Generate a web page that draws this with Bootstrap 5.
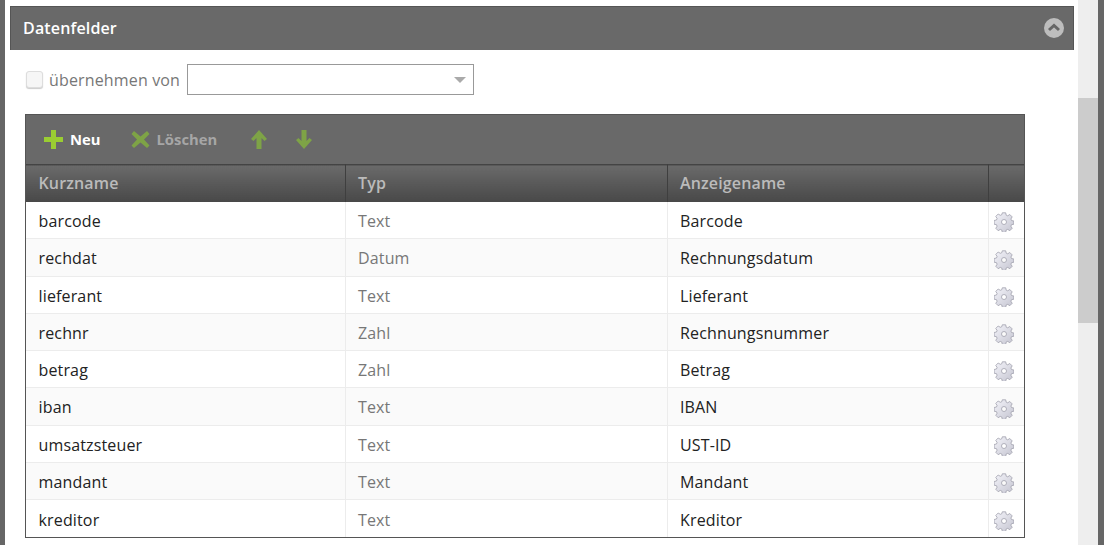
<!DOCTYPE html>
<html lang="de">
<head>
  <meta charset="UTF-8">
  <title>Datenfelder</title>
  <link href="https://cdn.jsdelivr.net/npm/bootstrap@5.3.0/dist/css/bootstrap.min.css" rel="stylesheet">
  <style>
    html, body { height: 545px; overflow: hidden; }
    body { font-family: "Open Sans", "Liberation Sans", sans-serif; font-size: 16px; letter-spacing: .15px; color: #222; background: #fff; }
    .edge-left { width: 5px; background: #666; }
    .edge-right { width: 6px; background: #666; }
    .main { width: 1073px; padding: 6px 0 0 5px; }
    .scroll-track { width: 20px; background: #eee; }
    .scroll-thumb { height: 225px; margin-top: 98px; background: #ccc; }
    .panel-head { width: 1064px; height: 44px; background: #696969; border: 1px solid #555; border-bottom: 0; padding: 0 9px 1px 12px; color: #fff; font-weight: 600; }
    .copy-row { height: 64px; padding: 0 0 5px 16px; color: #777; }
    .fake-check { width: 17px; height: 17px; border: 1px solid #ddd; border-radius: 3px; background: #f6f6f6; box-shadow: 0 1px 1px #ccc; margin-right: 6px; }
    .fake-select { width: 287px; height: 31px; border: 1px solid #999; margin-left: 7px; padding-right: 7px; }
    .caret { border-left: 6px solid transparent; border-right: 6px solid transparent; border-top: 6px solid #aaa; }
    .grid-box { width: 1000px; margin-left: 15px; border: 1px solid #555; border-top: 0; }
    .grid-tools { height: 50px; background: #696969; border-top: 1px solid #555; padding-left: 17px; font-size: 14.8px; font-weight: 700; color: #fff; letter-spacing: 0; }
    .tool { margin-right: 30px; }
    .tool.off { margin-right: 33px; color: #a6a6a6; }
    .tool.arrow { margin-right: 27px; }
    .tool svg { display: block; }
    .tool-label { margin-left: 6px; }
    .tool.off .tool-label { margin-left: 7px; }
    .grid-table { table-layout: fixed; width: 998px; margin: 0; }
    .grid-table th { height: 37px; padding: 0 12.500px; font-weight: 600; color: #bbb; background: linear-gradient(#6a6a6a, #484848); border-top: 1px solid #444; border-right: 1px solid #3f3f3f; vertical-align: middle; }
    .grid-table td { height: 37.3px; padding: 1.600px 12.500px 0; vertical-align: middle; border-bottom: 1px solid #ececec; border-right: 1px solid #ececec; color: #222; white-space: nowrap; }
    .grid-table tr:nth-child(even) td { background: #fafafa; }
    .grid-table th:last-child, .grid-table td:last-child { border-right: 0; padding: 0 5px 0 0; text-align: center; }
    .grid-table td svg { display: inline-block; vertical-align: middle; margin-top: 1px; }
    .grid-table tr:last-child td { border-bottom: 0; }
    .grid-table td.type { color: #777; }
  </style>
</head>
<body>
<svg width="0" height="0" class="position-absolute">
  <defs>
    <linearGradient id="gearFill" x1="0" y1="0" x2="1" y2="1">
      <stop offset="0" stop-color="#f4f4fa"/>
      <stop offset="1" stop-color="#c4c4d0"/>
    </linearGradient>
    <symbol id="gear" viewBox="0 0 20 20">
      <path fill="url(#gearFill)" stroke="#a0a0ac" stroke-width=".8" fill-rule="evenodd" d="M8.3 .8h3.400l.5 2.400 1.500.6 2.100-1.300 2.400 2.400-1.300 2.100.6 1.500 2.400.5v3.200l-2.400.5-.6 1.500 1.300 2.100-2.400 2.400-2.100-1.300-1.500.6-.5 2.400H8.300l-.5-2.400-1.500-.6-2.100 1.300-2.400-2.400 1.300-2.100-.6-1.500-2.400-.5V8.500l2.400-.5.6-1.500-1.300-2.100 2.400-2.400 2.100 1.300 1.500-.6zM10 7.500a2.500 2.500 0 1 0 0 5 2.500 2.500 0 0 0 0-5z"/>
    </symbol>
  </defs>
</svg>
<div class="d-flex" style="height:545px">
  <div class="edge-left flex-shrink-0"></div>
  <div class="main flex-shrink-0">
    <div class="panel-head d-flex align-items-center justify-content-between">
      <span>Datenfelder</span>
      <svg width="20" height="20" viewBox="0 0 20 20">
        <circle cx="10" cy="10" r="10" fill="#bdbdbd"/>
        <path d="M5 12l5-4.500 5 4.500" fill="none" stroke="#666" stroke-width="3"/>
      </svg>
    </div>
    <div class="copy-row d-flex align-items-center">
      <span class="fake-check"></span>
      <span>übernehmen von</span>
      <div class="fake-select d-flex align-items-center justify-content-end"><span class="caret"></span></div>
    </div>
    <div class="grid-box">
      <div class="grid-tools d-flex align-items-center">
        <div class="tool d-flex align-items-center">
          <svg width="21" height="21" viewBox="0 0 21 21"><path d="M8 1h5v7h7v5h-7v7H8v-7H1V8h7z" fill="#9acd32"/></svg>
          <span class="tool-label">Neu</span>
        </div>
        <div class="tool off d-flex align-items-center">
          <svg width="19" height="19" viewBox="0 0 19 19"><path d="M3 1l6.500 5.500L16 1l2.500 3-5.500 5.500 5.500 6-2.500 2.500-6.500-5.500L3 18 .5 15.500 6 9.500 .5 4z" fill="#7ea346"/></svg>
          <span class="tool-label">Löschen</span>
        </div>
        <div class="tool arrow">
          <svg width="18" height="21" viewBox="0 0 18 21"><path d="M9 1l8 9-2.500 2-3-3V20h-5V9l-3 3L1 10z" fill="#7ea346"/></svg>
        </div>
        <div class="tool arrow">
          <svg width="18" height="21" viewBox="0 0 18 21"><path d="M9 20l-8-9 2.500-2 3 3V1h5v11l3-3 2.500 2z" fill="#7ea346"/></svg>
        </div>
      </div>
      <table class="grid-table">
        <colgroup><col style="width:319px"><col style="width:322px"><col style="width:321px"><col></colgroup>
        <thead>
          <tr><th>Kurzname</th><th>Typ</th><th>Anzeigename</th><th></th></tr>
        </thead>
        <tbody id="rows"></tbody>
      </table>
    </div>
  </div>
  <div class="scroll-track flex-shrink-0"><div class="scroll-thumb"></div></div>
  <div class="edge-right flex-shrink-0"></div>
</div>

<script src="https://cdn.jsdelivr.net/npm/bootstrap@5.3.0/dist/js/bootstrap.bundle.min.js"></script>
<script>
  const fields = [
    ['barcode', 'Text', 'Barcode'],
    ['rechdat', 'Datum', 'Rechnungsdatum'],
    ['lieferant', 'Text', 'Lieferant'],
    ['rechnr', 'Zahl', 'Rechnungsnummer'],
    ['betrag', 'Zahl', 'Betrag'],
    ['iban', 'Text', 'IBAN'],
    ['umsatzsteuer', 'Text', 'UST-ID'],
    ['mandant', 'Text', 'Mandant'],
    ['kreditor', 'Text', 'Kreditor']
  ];
  document.getElementById('rows').innerHTML = fields.map(function (f) {
    return '<tr><td>' + f[0] + '</td><td class="type">' + f[1] + '</td><td>' + f[2] + '</td>' +
      '<td><svg width="20" height="20"><use href="#gear"/></svg></td></tr>';
  }).join('');
</script>
</body>
</html>
